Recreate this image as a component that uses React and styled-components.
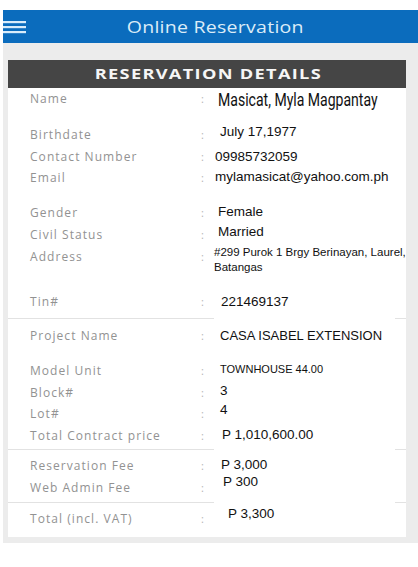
import React from "react";
import styled, { createGlobalStyle } from "styled-components";

const GlobalStyle = createGlobalStyle`
  html, body {
    margin: 0;
    padding: 0;
    background: #ffffff;
  }
  * {
    box-sizing: border-box;
  }
`;

const rows = [
  { label: "Name", value: "Masicat, Myla Magpantay", h: 36, kind: "name", dy: 1, dx: 0 },
  { label: "Birthdate", value: "July 17,1977", h: 22, dy: -3, dx: 2 },
  { label: "Contact Number", value: "09985732059", h: 21, dy: 0, dx: -3 },
  { label: "Email", value: "mylamasicat@yahoo.com.ph", h: 35, dy: -1, dx: -3 },
  { label: "Gender", value: "Female", h: 22, dy: -1, dx: 0 },
  { label: "Civil Status", value: "Married", h: 22, dy: -3, dx: 0 },
  { label: "Address", value: "#299 Purok 1 Brgy Berinayan, Laurel, Batangas", h: 45, kind: "small", dy: -3, dx: -4 },
  { label: "Tin#", value: "221469137", h: 27, dy: 0, dx: 3, divider: true },
  { label: "Project Name", value: "CASA ISABEL EXTENSION", h: 41, pt: 6, kind: "mid", dy: 0, dx: 2 },
  { label: "Model Unit", value: "TOWNHOUSE 44.00", h: 22, kind: "tiny", dy: -1, dx: 2 },
  { label: "Block#", value: "3", h: 21, dy: -2, dx: 2 },
  { label: "Lot#", value: "4", h: 22, dy: -4, dx: 2 },
  { label: "Total Contract price", value: "P 1,010,600.00", h: 24, dy: -1, dx: 4, divider: true },
  { label: "Reservation Fee", value: "P 3,000", h: 27, pt: 5, dy: -1, dx: 3 },
  { label: "Web Admin Fee", value: "P 300", h: 25, dy: -6, dx: 5, divider: true },
  { label: "Total (incl. VAT)", value: "P 3,300", h: 34, pt: 5, dy: -5, dx: 10 },
];

const valueFonts = {
  name: { size: 18, line: 21 },
  small: { size: 11.5, line: 15 },
  mid: { size: 13, line: 21 },
  tiny: { size: 11, line: 21 },
  normal: { size: 13.5, line: 21 },
};

function HamburgerIcon() {
  return (
    <svg width="23" height="13" viewBox="0 0 23 13">
      <rect x="0" y="0" width="23" height="2.2" fill="#d9ecfa" />
      <rect x="0" y="5" width="23" height="2.2" fill="#d9ecfa" />
      <rect x="0" y="10" width="23" height="2.2" fill="#d9ecfa" />
    </svg>
  );
}

function App() {
  return (
    <Page>
      <GlobalStyle />
      <Header>
        <MenuButton>
          <HamburgerIcon />
        </MenuButton>
        <HeaderTitle>
          <Stretch $x={1.26}>Online Reservation</Stretch>
        </HeaderTitle>
      </Header>
      <Panel>
        <TitleBar>
          <Stretch $x={1.3}>RESERVATION DETAILS</Stretch>
        </TitleBar>
        <Card>
          {rows.map((r) => (
            <React.Fragment key={r.label}>
              <Row $h={r.h} $pt={r.pt || 0}>
                <Label>{r.label}</Label>
                <Colon>:</Colon>
                <Value $kind={r.kind || "normal"} $dy={r.dy} $dx={r.dx}>
                  {r.kind === "name" ? <Squeeze>{r.value}</Squeeze> : r.value}
                </Value>
              </Row>
              {r.divider && <Divider />}
            </React.Fragment>
          ))}
        </Card>
      </Panel>
    </Page>
  );
}

export default App;

const Page = styled.div`
  width: 418px;
  padding: 10px 0 0 3px;
  background: #ffffff;
`;

const Header = styled.header`
  height: 33px;
  background: #0b6cbd;
  display: flex;
  align-items: center;
`;

const MenuButton = styled.div`
  width: 23px;
  height: 13px;
  margin-top: 2px;
  display: flex;
`;

const Stretch = styled.span`
  display: inline-block;
  transform: scaleX(${(p) => p.$x});
  transform-origin: center;
  white-space: nowrap;
`;

const HeaderTitle = styled.h1`
  flex: 1;
  margin: 0;
  padding-right: 14px;
  text-align: center;
  font-family: "Open Sans", sans-serif;
  font-weight: 400;
  font-size: 15.5px;
  letter-spacing: 0.2px;
  color: #dcecf8;
`;

const Panel = styled.div`
  background: #ececec;
  padding: 17px 12px 6px 5px;
`;

const TitleBar = styled.div`
  height: 28px;
  background: #454545;
  color: #f6f6f6;
  font-family: "Open Sans", sans-serif;
  font-weight: 700;
  font-size: 14px;
  line-height: 28px;
  letter-spacing: 1px;
  text-align: center;
  padding-left: 2px;
`;

const Card = styled.div`
  background: #ffffff;
  display: flex;
  flex-direction: column;
`;

const Row = styled.div`
  height: ${(p) => p.$h}px;
  padding-top: ${(p) => p.$pt}px;
  display: grid;
  grid-template-columns: 192px 18px 1fr;
  align-items: start;
`;

const Label = styled.div`
  padding-left: 22px;
  font-family: "Open Sans", sans-serif;
  font-size: 12px;
  line-height: 21px;
  letter-spacing: 1.05px;
  color: #929292;
  white-space: nowrap;
`;

const Colon = styled.div`
  padding-left: 1px;
  font-family: "Open Sans", sans-serif;
  font-size: 11px;
  line-height: 21px;
  color: #b5b5b5;
`;

const Squeeze = styled.span`
  display: inline-block;
  transform: scaleX(0.78);
  transform-origin: left center;
  white-space: nowrap;
`;

const Value = styled.div`
  margin-top: ${(p) => p.$dy + (p.$kind === "small" ? 2 : 0)}px;
  margin-left: ${(p) => p.$dx}px;
  font-family: ${(p) =>
    p.$kind === "name"
      ? `Roboto, "DejaVu Sans", sans-serif`
      : `"Liberation Sans", Arial, sans-serif`};
  font-size: ${(p) => valueFonts[p.$kind].size}px;
  line-height: ${(p) => valueFonts[p.$kind].line}px;
  white-space: ${(p) => (p.$kind === "small" ? "normal" : "nowrap")};
  color: #111111;
`;

const Divider = styled.div`
  height: 1px;
  background: linear-gradient(
    to right,
    #e2e2e2 0,
    #e2e2e2 206px,
    transparent 206px,
    transparent 387px,
    #e2e2e2 387px
  );
`;
